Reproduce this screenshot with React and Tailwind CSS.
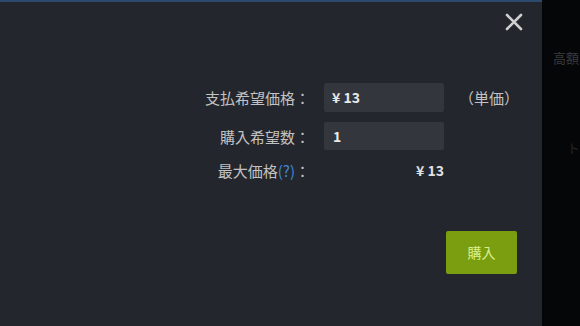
import React from 'react';

const Row = ({ label, children, suffix }) => (
    <>
        <div className="text-right text-[15px] text-[#c2c2c2] leading-none">{label}</div>
        <div>{children}</div>
        <div className="text-[15px] text-[#c2c2c2] leading-none">{suffix}</div>
    </>
);

const App = () => {
    return (
        <div
            className="flex w-[580px] h-[326px] overflow-hidden bg-[#050608]"
            style={{ fontFamily: '"Noto Sans CJK JP", "Noto Sans", sans-serif' }}
        >
            {/* dialog */}
            <div className="relative w-[545px] h-full bg-[#23262d] border-t-2 border-[#2c4a6d]">
                <button className="absolute top-[8px] left-[502px] w-[24px] h-[24px] flex items-center justify-center">
                    <svg width="18" height="18" viewBox="0 0 18 18">
                        <path d="M2 2 L16 16 M16 2 L2 16" stroke="#cfcfcf" strokeWidth="2.6" strokeLinecap="round" />
                    </svg>
                </button>

                <div className="ml-[180px] mt-[81px] grid grid-cols-[130px_120px_auto] gap-x-[14px] gap-y-[10px] items-center">
                    <Row label="支払希望価格：" suffix={<span className="ml-[1px]">（単価）</span>}>
                        <div className="h-[29px] bg-[#33363d] rounded-[2px] flex items-center pl-[8px] text-[14px] font-bold text-[#e8e8e8]">
                            ¥ 13
                        </div>
                    </Row>
                    <Row label="購入希望数：">
                        <div className="h-[28px] bg-[#33363d] rounded-[2px] flex items-center pl-[9px] text-[14px] font-bold text-[#e8e8e8]">
                            1
                        </div>
                    </Row>
                    <Row
                        label={
                            <span>
                                最大価格<span className="text-[#3f86d0]">(?)</span>：
                            </span>
                        }
                    >
                        <div className="h-[20px] flex items-center justify-end text-[14px] font-bold text-[#e0e0e0]">¥ 13</div>
                    </Row>
                </div>

                <div className="flex justify-end pr-[25px] mt-[51px]">
                    <button className="w-[71px] h-[43px] rounded-[2px] bg-[#7a9e10] text-[14px] text-[#d9ef8e]">
                        購入
                    </button>
                </div>
            </div>

            {/* background page peeking through */}
            <div className="flex-1 flex flex-col pt-[48px] pl-[11px] text-[13px] text-[#3a3b3d] whitespace-nowrap">
                <div>高額</div>
                <div className="mt-[70px] ml-[14px] text-[#222325]">ト</div>
            </div>
        </div>
    );
};

export default App;
